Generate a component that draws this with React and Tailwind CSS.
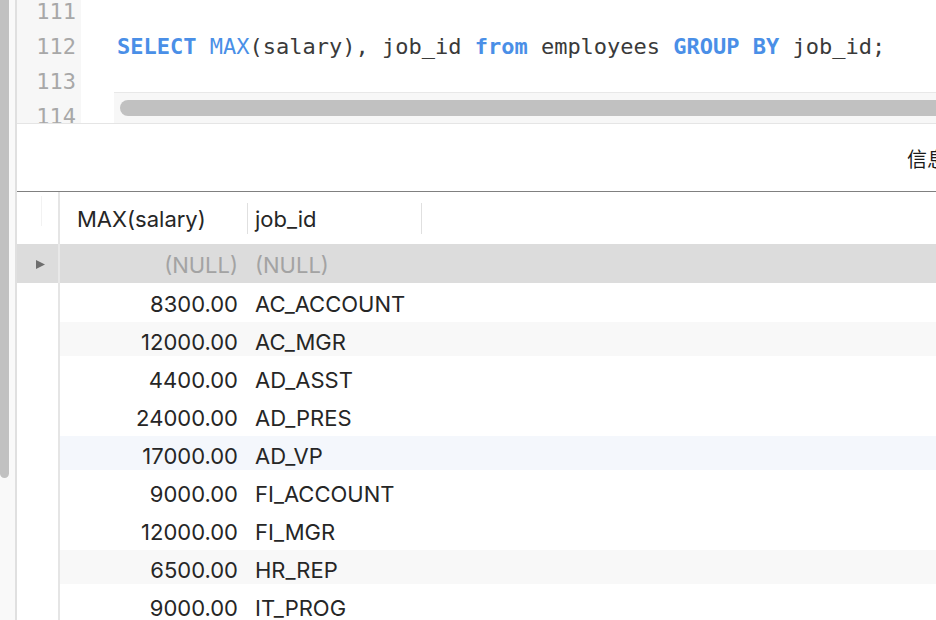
import React from 'react'

const rows = [
  { v: '8300.00', id: 'AC_ACCOUNT' },
  { v: '12000.00', id: 'AC_MGR', stripe: 'bg-[#f8f8f8]' },
  { v: '4400.00', id: 'AD_ASST' },
  { v: '24000.00', id: 'AD_PRES' },
  { v: '17000.00', id: 'AD_VP', stripe: 'bg-[#f4f7fc]' },
  { v: '9000.00', id: 'FI_ACCOUNT' },
  { v: '12000.00', id: 'FI_MGR' },
  { v: '6500.00', id: 'HR_REP', stripe: 'bg-[#f8f8f8]' },
  { v: '9000.00', id: 'IT_PROG' }
]

const mono = "font-['DejaVu_Sans_Mono',monospace]"
const kw = 'text-[#4a8fe7] font-bold'

export default function App() {
  return (
    <div className="w-[936px] h-[620px] overflow-hidden flex bg-white">
      {/* outer vertical scrollbar */}
      <div className="w-[15px] shrink-0 bg-[#f9f9f9]">
        <div className="w-[9px] h-[478px] bg-[#c1c1c1] rounded-b-[5px]" />
      </div>
      <div className="w-[2px] shrink-0 bg-[#e0e0e0]" />

      <div className="flex-1 min-w-0 flex flex-col">
        {/* editor */}
        <div className={`h-[124px] shrink-0 relative overflow-hidden border-b border-[#e5e5e5] flex ${mono} text-[22px] leading-[35px]`}>
          <div className="w-[64px] shrink-0 bg-[#f7f7f7] text-right pr-[5px] text-[#a8a8a8] -mt-[6px]">
            <div>111</div>
            <div>112</div>
            <div>113</div>
            <div>114</div>
          </div>
          <div className="pl-[36px] -mt-[6px] text-[#3a3a3a] whitespace-pre">
            <div>&nbsp;</div>
            <div>
              <span className={kw}>SELECT</span> <span className="text-[#4a8fe7]">MAX</span>(salary), job_id{' '}
              <span className={kw}>from</span> employees <span className={kw}>GROUP</span>{' '}
              <span className={kw}>BY</span> job_id;
            </div>
          </div>
          {/* horizontal scrollbar overlay */}
          <div className="absolute left-[97px] right-0 top-[92px] bottom-0 bg-[#f7f7f7] border-t border-[#e8e8e8] pt-[7px] pl-[6px]">
            <div className="h-[16px] bg-[#c1c1c1] rounded-l-full" />
          </div>
        </div>

        {/* info bar */}
        <div className="h-[68px] shrink-0 border-b border-[#808080] flex items-center pl-[890px] whitespace-nowrap overflow-hidden">
          <span className="text-[20px] text-[#1a1a1a] font-['Noto_Sans_CJK_SC',sans-serif] pt-[2px]">信息</span>
        </div>

        {/* result grid */}
        <div className="flex-1 font-['Inter',sans-serif] text-[22px] text-[#262626]">
          <div className="h-[52px] flex">
            <div className="w-[43px] shrink-0 border-r-2 border-[#e5e5e5] flex">
              <div className="ml-[24px] mt-[4px] w-px h-[30px] bg-[#f2f2f2]" />
            </div>
            <div className="w-[187px] shrink-0 flex items-center pl-[17px] pt-[2px]">MAX(salary)</div>
            <div className="w-px h-[31px] self-center bg-[#e0e0e0]" />
            <div className="w-[173px] shrink-0 flex items-center pl-[7px] pt-[2px]">job_id</div>
            <div className="w-px h-[31px] self-center bg-[#e0e0e0]" />
          </div>

          <div className="h-[39px] flex bg-[#dcdcdc]">
            <div className="w-[43px] shrink-0 border-r-2 border-[#e8e8e8] flex items-center pl-[19px] pt-[2px]">
              <svg width="9" height="9" viewBox="0 0 9 9">
                <polygon points="0,0 9,4.5 0,9" fill="#6e6e6e" />
              </svg>
            </div>
            <div className="w-[187px] shrink-0 flex items-center justify-end pr-[9px] pt-[3px] text-[#a3a3a3]">(NULL)</div>
            <div className="flex items-center pl-[8px] pt-[3px] text-[#a3a3a3]">(NULL)</div>
          </div>

          {rows.map((r, i) => (
            <div key={i} className="h-[38px] flex">
              <div className="w-[43px] shrink-0 border-r-2 border-[#e5e5e5]" />
              <div className={`flex-1 flex border-t border-b-[3px] border-white ${r.stripe || ''}`}>
                <div className="w-[187px] shrink-0 flex items-center justify-end pr-[9px] pt-[6px]">{r.v}</div>
                <div className="flex items-center pl-[8px] pt-[6px]">{r.id}</div>
              </div>
            </div>
          ))}
        </div>
      </div>
    </div>
  )
}
